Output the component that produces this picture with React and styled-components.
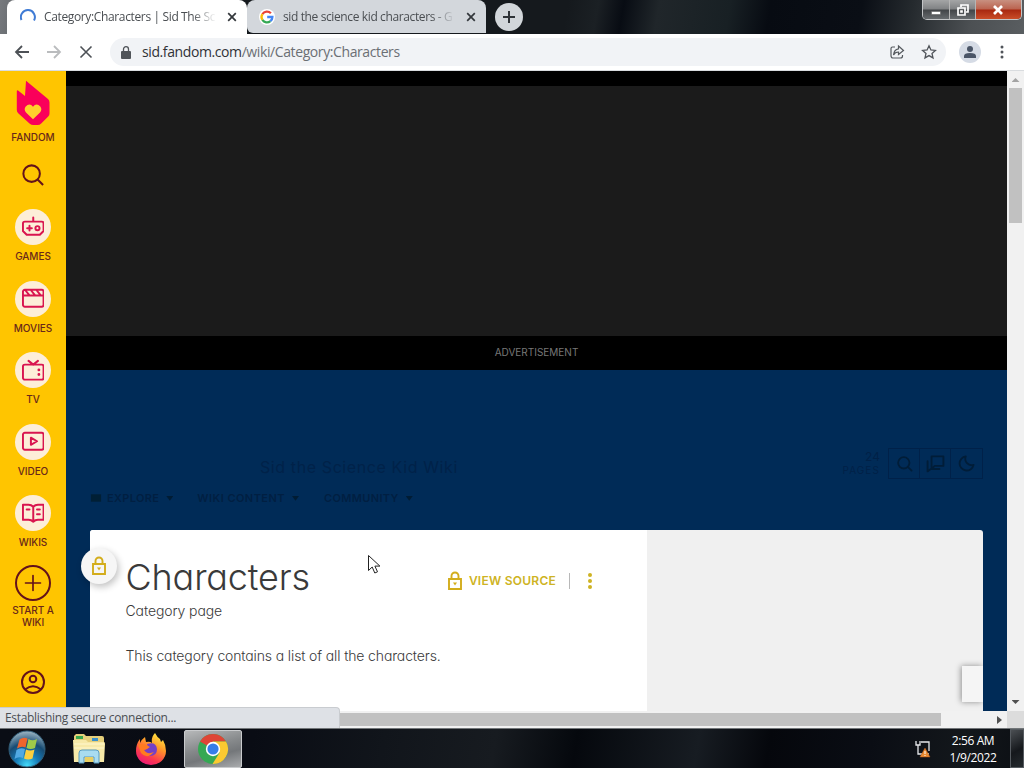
import React from "react";
import styled, { createGlobalStyle } from "styled-components";

const GlobalStyle = createGlobalStyle`
  * {
    box-sizing: border-box;
  }

  body {
    margin: 0;
    overflow: hidden;
    background: #000;
  }
`;

const uiFont = `"Open Sans", "Noto Sans", sans-serif`;
const wikiFont = `Inter, Lato, sans-serif`;

const Screen = styled.div`
  display: flex;
  flex-direction: column;
  width: 1024px;
  height: 768px;
  overflow: hidden;
  font-family: ${uiFont};
`;

const Text = styled.span`
  display: block;
  flex: none;
  white-space: nowrap;
  font-size: ${props => props.$size || 12}px;
  line-height: ${props => props.$line || 16}px;
  letter-spacing: ${props => props.$track || 0}px;
  font-weight: ${props => props.$weight || 400};
  color: ${props => props.$color || "#4a4e52"};
`;

const WikiText = styled(Text)`
  font-family: ${wikiFont};
  font-feature-settings: "cv11", "ss03";
`;

/* Browser window */

const TabStrip = styled.div`
  display: flex;
  flex: none;
  height: 34px;
  background: linear-gradient(
    100deg,
    #777a7e 0,
    #65696d 20px,
    #15191d 60px,
    #15191d 560px,
    #1b2024 590px,
    #080c13 615px,
    #20262a 650px,
    #182024 720px,
    #070b12 760px,
    #0a0e15 850px,
    #252a2e 900px,
    #4c5053 960px,
    #5c6063 1024px
  );
`;

const Tab = styled.div`
  display: flex;
  align-items: center;
  flex: none;
  height: 34px;
  width: ${props => props.$width}px;
  padding-left: ${props => props.$pad}px;
  margin-left: ${props => props.$offset || 0}px;
  border-radius: 8px 8px 0 0;
  background: ${props => (props.$active ? "#fff" : "#d3d7dc")};
  ${props => !props.$active && "border-bottom-left-radius: 6px; height: 33px;"}
`;

const TabTitle = styled(Text)`
  width: ${props => props.$width}px;
  margin-left: 8px;
  mask-image: linear-gradient(90deg, #000 calc(100% - 24px), transparent);
`;

const TabClose = styled.svg`
  margin-left: 11px;
`;

const NewTab = styled.div`
  display: flex;
  align-items: center;
  justify-content: center;
  width: 28px;
  height: 28px;
  margin: 3px 0 0 9px;
  border-radius: 50%;
  background: #d2d6da;
`;

const WindowButtons = styled.div`
  display: flex;
  width: 100px;
  height: 20px;
  margin-left: auto;
  margin-right: 2px;
  border: 1px solid #c3c5c7;
  border-top: 0;
  border-radius: 0 0 5px 5px;
  overflow: hidden;
`;

const WindowButton = styled.div`
  display: flex;
  align-items: center;
  justify-content: center;
  width: ${props => props.$width}px;
  border-right: 1px solid #b5b5b5;
  background: ${props =>
    props.$close
      ? "linear-gradient(#c89080 0, #bb6450 9px, #a82810 10px, #ca4d28 19px)"
      : "linear-gradient(#a4a5a6 0, #808284 9px, #424548 10px, #676b6e 19px)"};

  &:last-child {
    border-right: 0;
  }
`;

const Toolbar = styled.div`
  display: flex;
  align-items: center;
  flex: none;
  height: 37px;
  padding: 0 12px 0 13px;
  background: #fff;
  border-bottom: 1px solid #d9dcdf;
`;

const NavIcons = styled.div`
  display: flex;
  gap: 14px;
`;

const AddressBar = styled.div`
  display: flex;
  align-items: center;
  width: 836px;
  height: 28px;
  margin-left: 15px;
  padding: 0 9px 0 11px;
  border-radius: 14px;
  background: #f1f3f6;
`;

const Url = styled(Text)`
  margin-left: 11px;
  margin-right: auto;

  b {
    font-weight: 400;
    color: #303236;
  }
`;

const Avatar = styled.div`
  display: flex;
  align-items: center;
  justify-content: center;
  width: 22px;
  height: 22px;
  margin-left: 13px;
  margin-right: 14px;
  border-radius: 50%;
  background: #d5dbe5;
`;

/* Page */

const Viewport = styled.div`
  display: flex;
  flex: none;
  height: 640px;
`;

const Sidebar = styled.div`
  display: flex;
  flex-direction: column;
  align-items: center;
  flex: none;
  width: 66px;
  padding-top: 9px;
  background: #ffc500;
`;

const SideLabel = styled(WikiText)`
  text-align: center;
  margin-top: ${props => props.$gap || 0}px;
`;

const SideSearch = styled.svg`
  flex: none;
  margin: 21px 0 23px;
`;

const SideItem = styled.div`
  display: flex;
  flex-direction: column;
  align-items: center;
  flex: none;
  height: 71.5px;

  &:nth-of-type(5) {
    height: 69.5px;
  }
`;

const Disc = styled.div`
  display: flex;
  align-items: center;
  justify-content: center;
  flex: none;
  width: 36px;
  height: 36px;
  border-radius: 50%;
  background: ${props => (props.$outline ? "transparent" : "#fdeed8")};
  border: ${props => (props.$outline ? "2px solid #63121b" : "0")};
`;

const UserIcon = styled.svg`
  flex: none;
  margin-top: 42px;
`;

const Main = styled.div`
  display: flex;
  flex-direction: column;
  width: 941px;
  background: #002b57;
`;

const AdTop = styled.div`
  flex: none;
  height: 265px;
  border-top: 15px solid #000;
  background: #1b1b1b;
`;

const AdFooter = styled.div`
  display: flex;
  align-items: center;
  justify-content: center;
  flex: none;
  height: 34px;
  padding-bottom: 2px;
  background: #000;
`;

const WikiHeader = styled.div`
  display: flex;
  flex-direction: column;
  flex: none;
  height: 160px;
  padding: 77px 24px 0;
`;

const WikiTop = styled.div`
  display: flex;
  align-items: center;
  height: 32px;
  padding-left: 170px;
`;

const WikiName = styled(WikiText)`
  padding-top: 7px;
`;

const PageCount = styled.div`
  margin-left: auto;
  margin-right: 8px;
  text-align: right;
`;

const HeaderTools = styled.div`
  display: flex;
  border: 1px solid #002149;
`;

const HeaderTool = styled.div`
  display: flex;
  align-items: center;
  justify-content: center;
  width: 31px;
  height: 29px;
  border-right: 1px solid #002149;

  &:last-child {
    border-right: 0;
  }
`;

const WikiNav = styled.div`
  display: flex;
  align-items: center;
  height: 16px;
  margin-top: 11px;
`;

const NavEntry = styled.div`
  display: flex;
  align-items: center;
  gap: 5px;
  margin-right: ${props => props.$after}px;
`;

const Caret = styled.i`
  width: 7px;
  height: 7px;
  margin-left: 2px;
  background: #001c34;
  clip-path: polygon(0 20%, 100% 20%, 50% 90%);
`;

const PageCard = styled.div`
  display: flex;
  flex: none;
  width: 893px;
  height: 181px;
  margin-left: 24px;
  border-radius: 3px 3px 0 0;
  background: #f0f0f0;
`;

const Article = styled.div`
  position: relative;
  flex: none;
  width: 557px;
  padding: 25px 36px 0 35.5px;
  border-radius: 3px 0 0 0;
  background: #fff;
`;

const Protection = styled.div`
  position: absolute;
  top: 18px;
  left: -9px;
  display: flex;
  align-items: center;
  justify-content: center;
  width: 36px;
  height: 36px;
  border-radius: 50%;
  background: #f6f6f6;
  box-shadow: 2px 3px 7px rgba(0, 0, 0, 0.24);
`;

const ArticleHead = styled.div`
  display: flex;
  align-items: center;
  height: 46px;
`;

const Title = styled(WikiText)`
  margin-top: -2px;
`;

const Description = styled(WikiText)`
  margin-top: 25px;
`;

const Actions = styled.div`
  display: flex;
  align-items: center;
  flex: none;
  margin: 5px 19px 0 auto;
`;

const ActionLabel = styled(WikiText)`
  margin-left: 6px;
  margin-right: 18px;
  padding-right: 13px;
  border-right: 1px solid #b8b8b8;
`;

const Rail = styled.div`
  display: flex;
  flex: 1;
  align-items: flex-end;
  justify-content: flex-end;
  padding-bottom: 9px;
  overflow: hidden;
`;

const RailButton = styled.div`
  width: 21px;
  height: 36px;
  background: #f5f5f5;
  box-shadow: -1px 0 6px rgba(0, 0, 0, 0.4);
`;

const ScrollBar = styled.div`
  display: flex;
  flex-direction: column;
  align-items: center;
  justify-content: space-between;
  width: 17px;
  background: #f1f1f1;
`;

const ScrollArrow = styled.i`
  flex: none;
  width: 8px;
  height: 4px;
  margin: ${props => (props.$up ? "7px 0 6px" : "auto 0 7px")};
  background: ${props => (props.$up ? "#a3a3a3" : "#505050")};
  clip-path: ${props =>
    props.$up ? "polygon(50% 0, 100% 100%, 0 100%)" : "polygon(0 0, 100% 0, 50% 100%)"};
`;

const ScrollThumb = styled.div`
  width: 13px;
  height: 135px;
  background: #c1c1c1;
`;

const BottomBar = styled.div`
  display: flex;
  flex: none;
  align-items: flex-end;
  height: 17px;
  background: #f1f1f1;
`;

const StatusBubble = styled.div`
  width: 340px;
  height: 21px;
  padding: 2px 5px;
  border-top: 1px solid #c9ccd0;
  border-right: 1px solid #c9ccd0;
  border-radius: 0 4px 0 0;
  background: #dee1e6;
  z-index: 1;
`;

const HorizontalThumb = styled.div`
  width: 601px;
  height: 13px;
  margin-bottom: 2px;
  background: #c1c1c1;
`;

const RightArrow = styled.i`
  width: 5px;
  height: 8px;
  margin: 0 5px 4px auto;
  background: #505050;
  clip-path: polygon(0 0, 100% 50%, 0 100%);
`;

const ScrollCorner = styled.div`
  width: 17px;
  height: 17px;
  background: #dcdcdc;
`;

/* Windows taskbar */

const Taskbar = styled.div`
  display: flex;
  align-items: center;
  flex: none;
  height: 40px;
  border-top: 1px solid #717578;
  background: linear-gradient(
    100deg,
    #0a0d15 0,
    #090c14 250px,
    #11151b 380px,
    #171b20 490px,
    #05080d 570px,
    #171c22 690px,
    #05070c 760px,
    #0a0d14 860px,
    #13171b 950px,
    #0b0e13 1024px
  );
`;

const TaskSlot = styled.div`
  display: flex;
  align-items: center;
  justify-content: center;
  flex: none;
  width: ${props => props.$width}px;
  height: 38px;

  ${props =>
    props.$active &&
    `
    margin-left: 5px;
    border: 1px solid #c9cbcd;
    border-radius: 2px;
    background: linear-gradient(165deg, #b7b9ba, #85888a 45%, #74777a 65%, #a9abad);
  `}
`;

const Clock = styled.div`
  width: 60px;
  margin-left: 12px;
  margin-right: 7px;
  text-align: center;
`;

const NetworkIcon = styled.svg`
  margin-left: auto;
`;

const ShowDesktop = styled.div`
  width: 14px;
  height: 39px;
  border: 1px solid #565b60;
  background: linear-gradient(150deg, #4b4f53, #15181c 55%, #252a2e);
`;

const Cursor = styled.svg`
  position: absolute;
  left: 367px;
  top: 554px;
  z-index: 2;
`;

const Icon = ({ size = 24, color = "currentColor", stroke = 2, children }) => (
  <svg
    width={size}
    height={size}
    viewBox="0 0 24 24"
    fill="none"
    stroke={color}
    strokeWidth={stroke}
    strokeLinecap="round"
    strokeLinejoin="round"
  >
    {children}
  </svg>
);

const Cross = () => (
  <TabClose width="10" height="10" viewBox="0 0 10 10" stroke="#33373b" strokeWidth="1.7">
    <path d="M1.2 1.2l7.6 7.6M8.8 1.2L1.2 8.8" />
  </TabClose>
);

const Padlock = () => (
  <svg width="16" height="20" viewBox="0 0 16 20" fill="none" stroke="#d3ad1c" strokeWidth="1.9">
    <path d="M2 8h12v10H2zM4.5 8V5a3.5 3.5 0 0 1 7 0v3" />
    <path d="M6 11.5h4l-2 3z" fill="#d3ad1c" stroke="none" />
  </svg>
);

const GoogleMark = () => (
  <svg width="16" height="16" viewBox="0 0 16 16">
    <circle cx="8" cy="8" r="8" fill="#fff" />
    <g fill="none" strokeWidth="2.3">
      <path d="M3.4 5.1A5.4 5.4 0 0 1 11.9 4.3" stroke="#ea4335" />
      <path d="M3.4 5.1a5.4 5.4 0 0 0 0 5.8" stroke="#fbbc05" />
      <path d="M3.4 10.9a5.4 5.4 0 0 0 8 1.3" stroke="#34a853" />
      <path d="M11.4 12.2A5.2 5.2 0 0 0 13.4 8H8.2" stroke="#4285f4" />
    </g>
  </svg>
);

const FandomMark = () => (
  <svg width="34" height="46" viewBox="0 0 34 46">
    <path
      d="M10 .8L32 19q1.500 1.400 1.500 3.500v11q0 1.800-1.300 3.100l-7 7q-1.500 1.500-3.600 1.500h-4.300q-2 0-3.500-1.400L2.200 33.300Q.8 31.900.8 29.800V11.500q0-2 1.600-.7L9 16z"
      fill="#fa005a"
    />
    <path
      d="M17 39.2l-7-6.800q-2.500-2.900-.3-5.900 3.900-4.200 7.300.2 3.400-4.400 7.300-.2 2.200 3-.3 5.900z"
      fill="#ffd12c"
    />
  </svg>
);

const categories = [
  {
    label: "GAMES",
    icon: (
      <>
        <path d="M12 6V1.500M3 6h18a2 2 0 0 1 2 2v8l-4 4H5l-4-4V8a2 2 0 0 1 2-2zM5.500 13h5M8 10.500v5" />
        <circle cx="16.5" cy="13" r="2.2" />
      </>
    ),
  },
  {
    label: "MOVIES",
    icon: (
      <path d="M3 3h18a2 2 0 0 1 2 2v14a2 2 0 0 1-2 2H3a2 2 0 0 1-2-2V5a2 2 0 0 1 2-2zM1 9h22M4 4l4 5M10 4l4 5M16 4l4 5" />
    ),
  },
  {
    label: "TV",
    icon: (
      <>
        <path d="M3 6h18a2 2 0 0 1 2 2v12a2 2 0 0 1-2 2H3a2 2 0 0 1-2-2V8a2 2 0 0 1 2-2zM7 2l5 4 5-4" />
        <path d="M18 11.500v.1M18 16.500v.1" strokeWidth="3" />
      </>
    ),
  },
  {
    label: "VIDEO",
    icon: (
      <path d="M3 3h18a2 2 0 0 1 2 2v14a2 2 0 0 1-2 2H3a2 2 0 0 1-2-2V5a2 2 0 0 1 2-2zM9.500 8.200v7.600L16 12z" />
    ),
  },
  {
    label: "WIKIS",
    icon: (
      <path d="M12 5Q10 3 7 3H1v16h6q3 0 5 2 2-2 5-2h6V3h-6q-3 0-5 2zM12 5v16M5 8h3M16 8h3M16 13h3" />
    ),
  },
];

const ChromeIcon = () => (
  <svg width="32" height="32" viewBox="0 0 32 32">
    <circle cx="16" cy="16" r="15" fill="#35a853" />
    <path d="M16 16L3 8.500A15 15 0 0 1 29 8.500H16z" fill="#df4536" />
    <path d="M16 8.500h13A15 15 0 0 1 15.500 31l7-11.200z" fill="#fbc931" />
    <circle cx="16" cy="16" r="7.2" fill="#fff" />
    <circle cx="16" cy="16" r="5.6" fill="#367de8" />
  </svg>
);

const FirefoxIcon = () => (
  <svg width="32" height="32" viewBox="0 0 32 32">
    <defs>
      <linearGradient id="fox" x1="0.8" y1="0" x2="0.3" y2="1">
        <stop offset="0" stopColor="#fff044" />
        <stop offset="0.4" stopColor="#ff9628" />
        <stop offset="0.75" stopColor="#fb3850" />
        <stop offset="1" stopColor="#e91878" />
      </linearGradient>
    </defs>
    <path
      d="M20 0q2 4 5 6l1 3 2-2q3 5 3 11A15 14 0 0 1 1 18Q1 11 5 6v4q2-4 5-6l1 5q4-1 6 1-1-6 3-10z"
      fill="url(#fox)"
    />
    <path d="M12 11q9-3 10 5 0 7-7 7-6-1-6-7 2 1 4-1z" fill="#7540c5" />
    <path d="M3 12q5-3 12 2-4 3-6 3 3 5 10 2-7 8-13 1z" fill="#ff7b20" />
  </svg>
);

const ExplorerIcon = () => (
  <svg width="34" height="32" viewBox="0 0 34 32">
    <path d="M2 3l2-2h8l2 2h16q2 0 2 2v24H2z" fill="#e5cf7b" />
    <path d="M4 3h7v3H4z" fill="#38a94e" />
    <path d="M20 5h6v3h-6z" fill="#3c91ca" />
    <path d="M1 7h13l2 2h16q1 0 1 2l-1 18H2z" fill="#f7e9a8" />
    <path d="M2 11h30M2 15h30" stroke="#fff7ce" />
    <path d="M7 30V20q0-3 3-3h14q3 0 3 3v10h-5v-6H12v6z" fill="#a9dcf0" stroke="#599bc0" />
    <path d="M13 24h8v5h-8z" fill="#e8ce64" />
  </svg>
);

const StartOrb = () => (
  <svg width="38" height="38" viewBox="0 0 38 38">
    <defs>
      <radialGradient id="orb" cx="0.5" cy="0.95" r="0.95">
        <stop offset="0" stopColor="#43daf9" />
        <stop offset="0.35" stopColor="#1679b6" />
        <stop offset="0.65" stopColor="#174b73" />
        <stop offset="1" stopColor="#a0b7c4" />
      </radialGradient>
    </defs>
    <circle cx="19" cy="19" r="18" fill="url(#orb)" stroke="#315d78" />
    <path d="M11.500 9.500q4-3 8-1l-2 9q-4-2-8.500 1z" fill="#ee652d" />
    <path d="M20.500 9q4 2.500 8.500 0l-2 9q-4.500 2-8.500 0z" fill="#9fca4a" />
    <path d="M8.500 20q4-3 8.500-1l-2 9q-4.500-2-8.500 1z" fill="#51a9e3" />
    <path d="M18 19.500q4 2 8.500 0l-2 9q-4.500 2-8.500 0z" fill="#fccf3f" />
  </svg>
);

const BrowserTabs = () => (
  <TabStrip>
    <Tab $active $width={240} $pad={13} $offset={7}>
      <svg width="16" height="16" viewBox="0 0 16 16" fill="none" stroke="#3f7bd5" strokeWidth="2">
        <path d="M1.500 11A7 7 0 1 1 14 11.500" />
      </svg>
      <TabTitle $width={172} $track={-0.36}>
        Category:Characters | Sid The Sc
      </TabTitle>
      <Cross />
    </Tab>
    <Tab $width={239} $pad={12}>
      <GoogleMark />
      <TabTitle $width={172} $track={-0.38}>
        sid the science kid characters - G
      </TabTitle>
      <Cross />
    </Tab>
    <NewTab>
      <svg width="14" height="14" viewBox="0 0 14 14" stroke="#2f3337" strokeWidth="2">
        <path d="M7 1v12M1 7h12" />
      </svg>
    </NewTab>
    <WindowButtons>
      <WindowButton $width={28}>
        <svg width="12" height="12" viewBox="0 0 12 12">
          <path d="M1.500 7.500h9v3h-9z" fill="#fff" stroke="#555" strokeWidth=".5" />
        </svg>
      </WindowButton>
      <WindowButton $width={26}>
        <svg width="12" height="12" viewBox="0 0 12 12" fill="none" stroke="#fff" strokeWidth="1.7">
          <path d="M4 3V1h7v7H9M1 4h7v7H1zM4 7h1v1H4z" />
        </svg>
      </WindowButton>
      <WindowButton $close $width={46}>
        <svg width="12" height="10" viewBox="0 0 12 10" stroke="#fff" strokeWidth="2.7">
          <path d="M2 1l8 8M10 1L2 9" />
        </svg>
      </WindowButton>
    </WindowButtons>
  </TabStrip>
);

const BrowserToolbar = () => (
  <Toolbar>
    <NavIcons>
      <svg width="18" height="18" viewBox="0 0 18 18" fill="none" stroke="#4d5156" strokeWidth="1.8">
        <path d="M16 9H3M9 3L3 9l6 6" />
      </svg>
      <svg width="18" height="18" viewBox="0 0 18 18" fill="none" stroke="#babcbe" strokeWidth="1.8">
        <path d="M2 9h13M9 3l6 6-6 6" />
      </svg>
      <svg width="18" height="18" viewBox="0 0 18 18" fill="none" stroke="#4d5156" strokeWidth="1.6">
        <path d="M3.500 3.500l11 11M14.500 3.500l-11 11" />
      </svg>
    </NavIcons>
    <AddressBar>
      <svg width="10" height="13" viewBox="0 0 10 13">
        <path d="M1 5h8q1 0 1 1v6q0 1-1 1H1q-1 0-1-1V6q0-1 1-1z" fill="#505459" />
        <path d="M2.500 6V3.200a2.500 2.500 0 0 1 5 0V6" fill="none" stroke="#505459" strokeWidth="1.3" />
      </svg>
      <Url $size={14} $line={20} $track={-0.4} $color="#6b6f74">
        <b>sid.fandom.com</b>/wiki/Category:Characters
      </Url>
      <svg width="16" height="16" viewBox="0 0 16 16" fill="none" stroke="#55595e" strokeWidth="1.2">
        <path d="M6 3H3.500Q2 3 2 4.500v7Q2 14 4 14h7.500q2 0 2-2v-1M9.500 2l5 4.500-5 4V8Q6 8 4.500 11 5 5.500 9.500 4.800z" />
      </svg>
      <svg
        width="16"
        height="16"
        viewBox="0 0 16 16"
        fill="none"
        stroke="#50545a"
        strokeWidth="1.3"
        style={{ marginLeft: 16 }}
      >
        <path d="M8 1.800l1.900 4.100 4.500.5-3.400 3 1 4.500L8 11.600l-4 2.300 1-4.500-3.400-3 4.500-.5z" />
      </svg>
    </AddressBar>
    <Avatar>
      <svg width="14" height="14" viewBox="0 0 14 14" fill="#4a5567">
        <circle cx="7" cy="4" r="3" />
        <path d="M1 13v-2q0-3 6-3t6 3v2z" />
      </svg>
    </Avatar>
    <svg width="4" height="14" viewBox="0 0 4 14" fill="#50545a" style={{ marginLeft: 5 }}>
      <circle cx="2" cy="2" r="1.5" />
      <circle cx="2" cy="7" r="1.5" />
      <circle cx="2" cy="12" r="1.5" />
    </svg>
  </Toolbar>
);

const GlobalNav = () => (
  <Sidebar>
    <FandomMark />
    <SideLabel $gap={5} $size={10} $line={12} $weight={500} $track={-0.05} $color="#69281a">
      FANDOM
    </SideLabel>
    <SideSearch width="22" height="22" viewBox="0 0 24 24" fill="none" stroke="#63121b" strokeWidth="2.2">
      <circle cx="10.500" cy="10.500" r="9" />
      <path d="M17 17l6 6" />
    </SideSearch>
    {categories.map(({ label, icon }) => (
      <SideItem key={label}>
        <Disc>
          <Icon size={22.5} stroke={2.1} color="#d9154f">
            {icon}
          </Icon>
        </Disc>
        <SideLabel $gap={5} $size={10} $line={12} $weight={500} $track={-0.05} $color="#69281a">
          {label}
        </SideLabel>
      </SideItem>
    ))}
    <Disc $outline>
      <Icon size={20} color="#63121b">
        <path d="M12 3v18M3 12h18" />
      </Icon>
    </Disc>
    <SideLabel $gap={3} $size={10} $line={12} $weight={500} $track={-0.05} $color="#69281a">
      START A<br />
      WIKI
    </SideLabel>
    <UserIcon width="24" height="24" viewBox="0 0 24 24" fill="none" stroke="#63121b" strokeWidth="2">
      <circle cx="12" cy="12" r="11" />
      <circle cx="12" cy="9" r="3.300" />
      <path d="M4 19.500Q12 13 20 19.500" />
    </UserIcon>
  </Sidebar>
);

const Header = () => (
  <WikiHeader>
    <WikiTop>
      <WikiName $size={16} $line={22} $track={0.6} $color="#002249">
        Sid the Science Kid Wiki
      </WikiName>
      <PageCount>
        <WikiText $size={12} $line={14} $color="#002147">
          24
        </WikiText>
        <WikiText $size={10} $line={12} $track={1.1} $color="#002147">
          PAGES
        </WikiText>
      </PageCount>
      <HeaderTools>
        <HeaderTool>
          <Icon size={17} stroke={2.6} color="#001d38">
            <circle cx="11" cy="11" r="8" />
            <path d="M17 17l5 5" />
          </Icon>
        </HeaderTool>
        <HeaderTool>
          <Icon size={19} stroke={2.4} color="#001d38">
            <path d="M7 3h15v12H11l-4 4zM2 9v13l4-3h11" />
          </Icon>
        </HeaderTool>
        <HeaderTool>
          <Icon size={17} stroke={2.6} color="#001d38">
            <path d="M11 2a10 10 0 1 0 11 12A9 9 0 0 1 11 2z" />
          </Icon>
        </HeaderTool>
      </HeaderTools>
    </WikiTop>
    <WikiNav>
      <NavEntry $after={24}>
        <svg width="12" height="10" viewBox="0 0 13 10">
          <path d="M1 1h11v8H1z" fill="#001f35" />
        </svg>
        <WikiText $size={11} $weight={600} $track={0.35} $color="#001f42">
          EXPLORE
        </WikiText>
        <Caret />
      </NavEntry>
      <NavEntry $after={25}>
        <WikiText $size={11} $weight={600} $track={0.45} $color="#001f42">
          WIKI CONTENT
        </WikiText>
        <Caret />
      </NavEntry>
      <NavEntry>
        <WikiText $size={11} $weight={600} $track={0.35} $color="#001f42">
          COMMUNITY
        </WikiText>
        <Caret />
      </NavEntry>
    </WikiNav>
  </WikiHeader>
);

const CategoryPage = () => (
  <PageCard>
    <Article>
      <Protection>
        <Padlock />
      </Protection>
      <ArticleHead>
        <Title $size={36} $line={46} $weight={300} $track={-0.15} $color="#3a3a3a">
          Characters
        </Title>
        <Actions>
          <Padlock />
          <ActionLabel $size={12} $weight={600} $track={0.25} $color="#ceb323">
            VIEW SOURCE
          </ActionLabel>
          <svg width="4" height="16" viewBox="0 0 4 16" fill="#ceb323">
            <circle cx="2" cy="2" r="2" />
            <circle cx="2" cy="8" r="2" />
            <circle cx="2" cy="14" r="2" />
          </svg>
        </Actions>
      </ArticleHead>
      <WikiText $size={14} $line={20} $weight={300} $track={-0.1} $color="#3a3a3a">
        Category page
      </WikiText>
      <Description $size={14} $line={20} $weight={300} $track={-0.13} $color="#3a3a3a">
        This category contains a list of all the characters.
      </Description>
    </Article>
    <Rail>
      <RailButton />
    </Rail>
  </PageCard>
);

const App = () => (
  <Screen>
    <GlobalStyle />
    <BrowserTabs />
    <BrowserToolbar />
    <Viewport>
      <GlobalNav />
      <Main>
        <AdTop />
        <AdFooter>
          <WikiText $size={10} $color="#777">
            ADVERTISEMENT
          </WikiText>
        </AdFooter>
        <Header />
        <CategoryPage />
      </Main>
      <ScrollBar>
        <ScrollArrow $up />
        <ScrollThumb />
        <ScrollArrow />
      </ScrollBar>
    </Viewport>
    <BottomBar>
      <StatusBubble>
        <Text $line={15} $track={-0.32} $color="#4a4e53">
          Establishing secure connection...
        </Text>
      </StatusBubble>
      <HorizontalThumb />
      <RightArrow />
      <ScrollCorner />
    </BottomBar>
    <Taskbar>
      <TaskSlot $width={54}>
        <StartOrb />
      </TaskSlot>
      <TaskSlot $width={69}>
        <ExplorerIcon />
      </TaskSlot>
      <TaskSlot $width={56}>
        <FirefoxIcon />
      </TaskSlot>
      <TaskSlot $active $width={58}>
        <ChromeIcon />
      </TaskSlot>
      <NetworkIcon width="16" height="18" viewBox="0 0 16 18" fill="none" stroke="#e7e9eb" strokeWidth="1.3">
        <path d="M1 1v4h4V1M3 5v9h4M6 2h8v9M8 14h6" />
        <path d="M10 8l5 9H5z" fill="#e98b32" stroke="#b65618" strokeWidth=".5" />
        <path d="M10 11v3M10 15v1" stroke="#fff" strokeWidth="1" />
      </NetworkIcon>
      <Clock>
        <Text $line={17} $track={-0.4} $color="#fff">
          2:56 AM
        </Text>
        <Text $line={17} $track={-0.4} $color="#fff">
          1/9/2022
        </Text>
      </Clock>
      <ShowDesktop />
    </Taskbar>
    <Cursor width="16" height="22" viewBox="0 0 16 22">
      <path d="M1.500 1.500v15l3.700-3.500 2.600 6 2.700-1.200-2.600-5.700h5z" fill="#fff" stroke="#222" />
    </Cursor>
  </Screen>
);

export default App;
